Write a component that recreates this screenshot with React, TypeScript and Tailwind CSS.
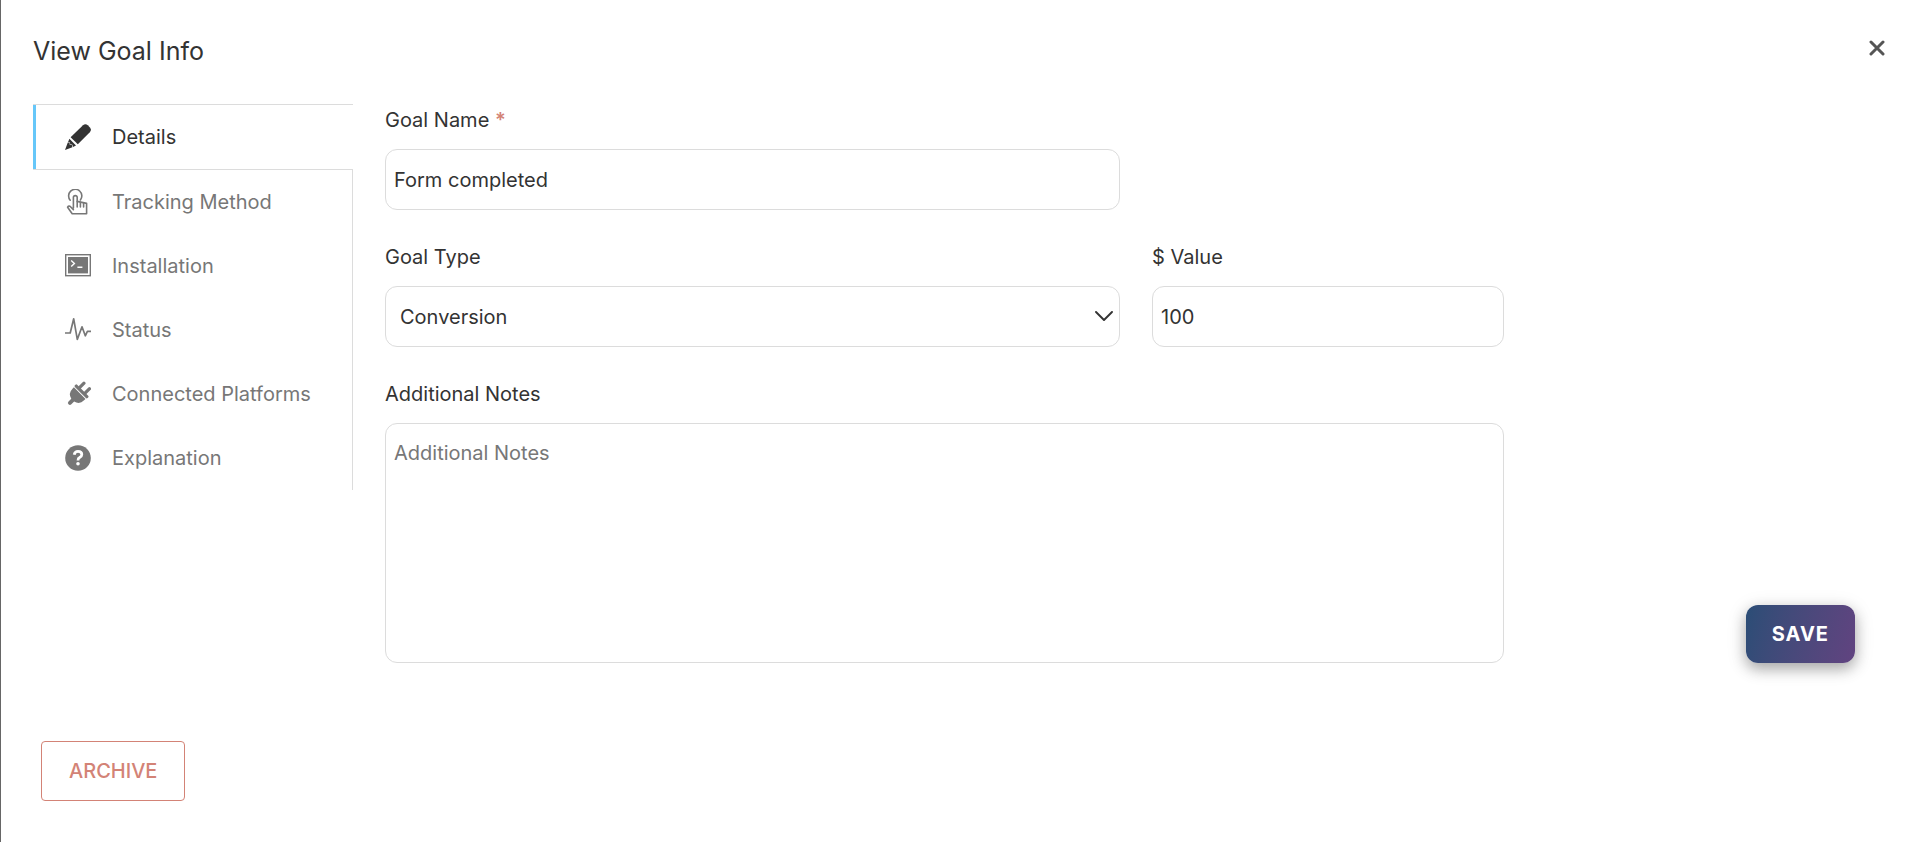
import React, { useState } from 'react';

const PencilIcon = () => (
  <svg viewBox="0 0 26 26" className="w-[26px] h-[26px]" fill="currentColor" aria-hidden="true">
    <path d="M5.6 13.2 18 1.2Q20.4-.9 22.8 1.2L24.9 3.4Q27 5.8 24.8 8.2L12.8 20.2Z" />
    <path d="M4.4 14.8 11 21.6 8 22.9 7.2 20.4 5.2 20.6 5 18.4 3 18.2Z" />
    <path d="M2.8 18.6 4.6 18.9 4.8 21 6.8 21 7.4 23.2 0 26Z" />
  </svg>
);

const TouchIcon = () => (
  <svg
    viewBox="0 0 26 26"
    className="w-[26px] h-[26px]"
    fill="none"
    stroke="currentColor"
    strokeWidth="1.6"
    strokeLinejoin="round"
    strokeLinecap="round"
    aria-hidden="true"
  >
    <path d="M5.2 11.2A6.6 6.6 0 1 1 15.4 11" />
    <path d="M8.4 19V8.3Q8.4 6.6 10.3 6.6T12.2 8.3V12.4L21.6 14.4V24.7H7.2L2.6 18.2Q3.4 16.8 5 17.3L8.4 20.6" />
    <path d="M12.2 12.4V18M15.4 13.4V18M18.6 14.2V18" />
  </svg>
);

const TerminalIcon = () => (
  <svg viewBox="0 0 26 26" className="w-[26px] h-[26px]" aria-hidden="true">
    <rect x="0.7" y="1.7" width="24.6" height="21" fill="none" stroke="currentColor" strokeWidth="1.4" />
    <rect x="3" y="4" width="20" height="16.4" fill="currentColor" />
    <path d="M6.2 7.6 9.4 10.6 6.2 13.6M12.4 14.2H17.4" fill="none" stroke="#fff" strokeWidth="1.4" />
  </svg>
);

const PulseIcon = () => (
  <svg
    viewBox="0 0 26 26"
    className="w-[26px] h-[26px]"
    fill="none"
    stroke="currentColor"
    strokeWidth="1.7"
    strokeLinejoin="round"
    aria-hidden="true"
  >
    <path d="M0 16H5.2L8.7 1.8 12.3 22.4 17 9.8 20.3 18.8 22.4 14.4H26" />
  </svg>
);

const PlugIcon = () => (
  <svg viewBox="0 0 26 26" className="w-[26px] h-[26px]" fill="currentColor" aria-hidden="true">
    <g transform="rotate(45 13 13)">
      <rect x="8" y="-0.4" width="3.2" height="9" rx="1.5" />
      <rect x="15.8" y="-0.4" width="3.2" height="9" rx="1.5" />
      <rect x="4.6" y="7" width="18" height="3.2" rx="1.2" />
      <path d="M5.4 11.2H21.8V13.2A8.2 8.2 0 0 1 15.6 21.1V25Q15.6 27 13.6 27T11.6 25V21.1A8.2 8.2 0 0 1 5.4 13.2Z" />
    </g>
  </svg>
);

const QuestionIcon = () => (
  <svg viewBox="0 0 26 26" className="w-[26px] h-[26px]" aria-hidden="true">
    <circle cx="13" cy="13" r="12.8" fill="currentColor" />
    <path
      d="M9.2 9.8Q9.8 6.4 13 6.4 16.8 6.4 16.8 9.6 16.8 11.4 14.6 12.6 13 13.4 13 15.4"
      fill="none"
      stroke="#fff"
      strokeWidth="2.8"
    />
    <circle cx="13" cy="18.8" r="1.8" fill="#fff" />
  </svg>
);

const tabs = [
  { name: 'Details', icon: <PencilIcon /> },
  { name: 'Tracking Method', icon: <TouchIcon /> },
  { name: 'Installation', icon: <TerminalIcon /> },
  { name: 'Status', icon: <PulseIcon /> },
  { name: 'Connected Platforms', icon: <PlugIcon /> },
  { name: 'Explanation', icon: <QuestionIcon /> },
];

const fieldClass = 'w-full rounded-xl border border-[#dcdcdc] bg-white outline-none focus:border-[#66c7f4]';

const App = () => {
  const [activeTab, setActiveTab] = useState('Details');
  const [goalName, setGoalName] = useState('Form completed');
  const [goalType, setGoalType] = useState('Conversion');
  const [value, setValue] = useState('100');
  const [notes, setNotes] = useState('');

  return (
    <div className="min-h-screen border-l border-[#666] bg-white pl-8 pr-[25px] pt-8 pb-10 font-['Inter',sans-serif] text-xl leading-7 text-[#333]">
      {/* Header */}
      <header className="flex items-start justify-between">
        <h1 className="text-[25px] leading-[38px]">View Goal Info</h1>
        <button type="button" aria-label="Close" className="flex h-8 w-5 items-center justify-center text-[#555]">
          <svg viewBox="0 0 16 16" className="h-4 w-4" fill="none" stroke="currentColor" strokeWidth="3" strokeLinecap="round">
            <path d="M2 2 14 14M14 2 2 14" />
          </svg>
        </button>
      </header>

      <div className="mt-[34px] flex gap-8">
        {/* Sidebar tabs */}
        <nav className="flex w-80 shrink-0 flex-col self-start">
          {tabs.map((tab) => (
            <button
              key={tab.name}
              type="button"
              onClick={() => setActiveTab(tab.name)}
              className={
                activeTab === tab.name
                  ? 'flex h-[66px] items-center border-y border-y-[#dcdcdc] text-[#333]'
                  : 'flex h-16 items-center border-r border-[#dcdcdc] text-[#777]'
              }
            >
              <span
                className={
                  activeTab === tab.name
                    ? 'flex h-full items-center gap-[21px] border-l-[3px] border-[#66c7f9] pl-[29px]'
                    : 'flex h-full items-center gap-[21px] pl-8'
                }
              >
                {tab.icon}
                {tab.name}
              </span>
            </button>
          ))}
        </nav>

        {/* Goal form */}
        <form className="grid flex-1 grid-cols-12 gap-x-8 gap-y-[33px] pt-0.5" onSubmit={(e) => e.preventDefault()}>
          <div className="col-span-6">
            <label htmlFor="goal-name" className="block pb-[15px]">
              Goal Name <span className="font-semibold text-[#d38376]">*</span>
            </label>
            <input
              id="goal-name"
              type="text"
              value={goalName}
              onChange={(e) => setGoalName(e.target.value)}
              className={`${fieldClass} h-[61px] px-2`}
            />
          </div>

          <div className="col-span-6 col-start-1">
            <label htmlFor="goal-type" className="block pb-[15px]">
              Goal Type
            </label>
            <div className="relative">
              <select
                id="goal-type"
                value={goalType}
                onChange={(e) => setGoalType(e.target.value)}
                className={`${fieldClass} h-[61px] appearance-none pl-3.5 pr-10`}
              >
                <option>Conversion</option>
              </select>
              <svg
                viewBox="0 0 18 10"
                className="pointer-events-none absolute right-[7px] top-[25px] h-2.5 w-[18px]"
                fill="none"
                stroke="currentColor"
                strokeWidth="1.9"
                strokeLinecap="round"
                strokeLinejoin="round"
                aria-hidden="true"
              >
                <path d="M1 1 9 9 17 1" />
              </svg>
            </div>
          </div>

          <div className="col-span-3">
            <label htmlFor="goal-value" className="block pb-[15px]">
              $ Value
            </label>
            <input
              id="goal-value"
              type="text"
              value={value}
              onChange={(e) => setValue(e.target.value)}
              className={`${fieldClass} h-[61px] px-2`}
            />
          </div>

          <div className="col-span-9 col-start-1">
            <label htmlFor="goal-notes" className="block pb-[15px]">
              Additional Notes
            </label>
            <textarea
              id="goal-notes"
              placeholder="Additional Notes"
              value={notes}
              onChange={(e) => setNotes(e.target.value)}
              className={`${fieldClass} block h-60 resize-none px-2 py-[15px] placeholder:text-[#777]`}
            />
          </div>

          <div className="col-span-3 flex items-end justify-end pr-8">
            <button
              type="submit"
              className="h-[58px] rounded-xl bg-linear-105 from-[#2a4d76] to-[#614380] px-[26px] font-bold tracking-wider text-white shadow-[0_4px_20px_rgba(0,0,0,0.15),0_6px_14px_rgba(0,0,0,0.25)]"
            >
              SAVE
            </button>
          </div>
        </form>
      </div>

      <button
        type="button"
        className="ml-2 mt-[78px] h-[60px] rounded border border-[#d38376] px-[27px] font-medium text-[#d38376]"
      >
        ARCHIVE
      </button>
    </div>
  );
};

export default App;
